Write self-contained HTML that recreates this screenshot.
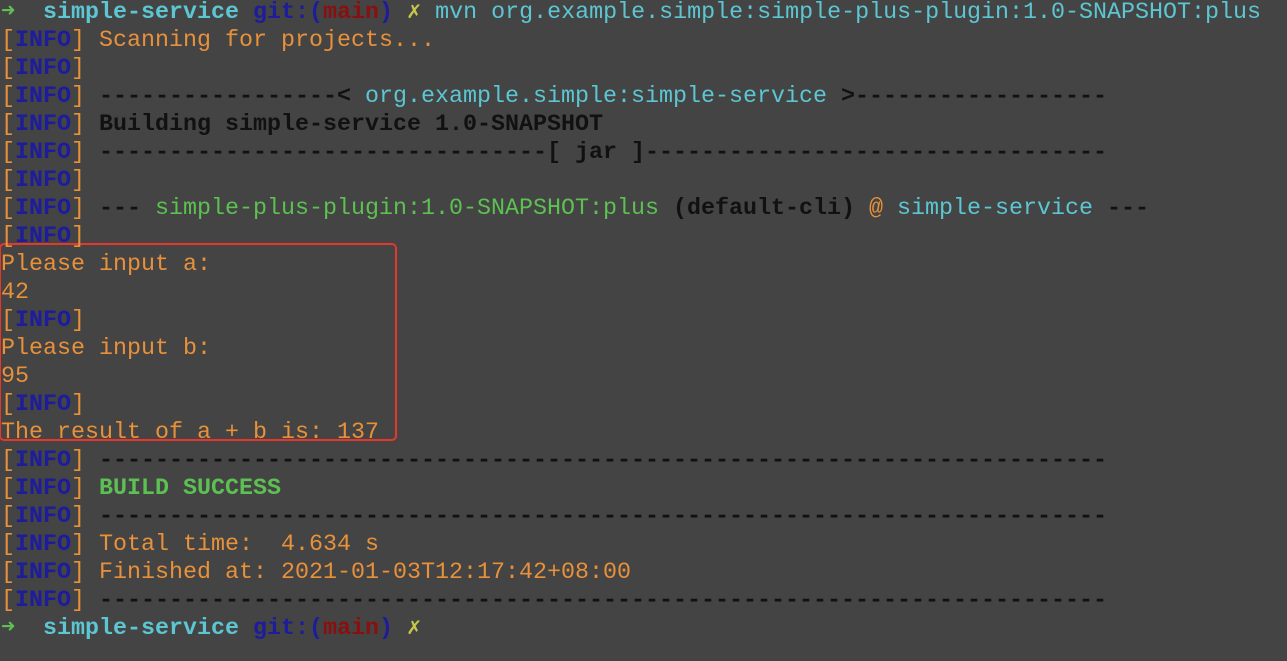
<!DOCTYPE html>
<html><head><meta charset="utf-8"><style>
html,body{margin:0;padding:0;background:#444444;width:1287px;height:661px;overflow:hidden}
pre{position:absolute;left:1px;top:-1px;margin:0;font-family:"Liberation Mono","DejaVu Sans Mono",monospace;font-size:23.33px;line-height:28px;color:#e8913a;}
.b{color:#1c1c9c;font-weight:bold}
.k{color:#111111;font-weight:bold}
.kb{color:#111111;font-weight:bold}
.c{color:#5cc6d2}
.cb{color:#5cc6d2;font-weight:bold}
.g{color:#5cc052}
.gb{color:#5cc052;font-weight:bold}
.bb{color:#1c1c9c;font-weight:bold}
.r{color:#8a1010;font-weight:bold}
.y{color:#c8c84a}
.box{position:absolute;left:-1px;top:243px;width:394px;height:194px;border:2.5px solid #e5372c;border-radius:5px}
</style></head><body>
<div class="box"></div>
<pre><span class="g">➜</span>  <span class="cb">simple-service</span> <span class="bb">git:(</span><span class="r">main</span><span class="bb">)</span> <span class="y">✗</span> <span class="c">mvn org.example.simple:simple-plus-plugin:1.0-SNAPSHOT:plus</span>
[<span class="b">INFO</span>] Scanning for projects...
[<span class="b">INFO</span>]
[<span class="b">INFO</span>] <span class="k">-----------------&lt; </span><span class="c">org.example.simple:simple-service</span><span class="k"> &gt;------------------</span>
[<span class="b">INFO</span>] <span class="kb">Building simple-service 1.0-SNAPSHOT</span>
[<span class="b">INFO</span>] <span class="k">--------------------------------[ </span><span class="kb">jar</span><span class="k"> ]---------------------------------</span>
[<span class="b">INFO</span>]
[<span class="b">INFO</span>] <span class="k">--- </span><span class="g">simple-plus-plugin:1.0-SNAPSHOT:plus</span> <span class="kb">(default-cli)</span> @ <span class="c">simple-service</span><span class="k"> ---</span>
[<span class="b">INFO</span>]
Please input a:
42
[<span class="b">INFO</span>]
Please input b:
95
[<span class="b">INFO</span>]
The result of a + b is: 137
[<span class="b">INFO</span>] <span class="k">------------------------------------------------------------------------</span>
[<span class="b">INFO</span>] <span class="gb">BUILD SUCCESS</span>
[<span class="b">INFO</span>] <span class="k">------------------------------------------------------------------------</span>
[<span class="b">INFO</span>] Total time:  4.634 s
[<span class="b">INFO</span>] Finished at: 2021-01-03T12:17:42+08:00
[<span class="b">INFO</span>] <span class="k">------------------------------------------------------------------------</span>
<span class="g">➜</span>  <span class="cb">simple-service</span> <span class="bb">git:(</span><span class="r">main</span><span class="bb">)</span> <span class="y">✗</span></pre>
</body></html>
